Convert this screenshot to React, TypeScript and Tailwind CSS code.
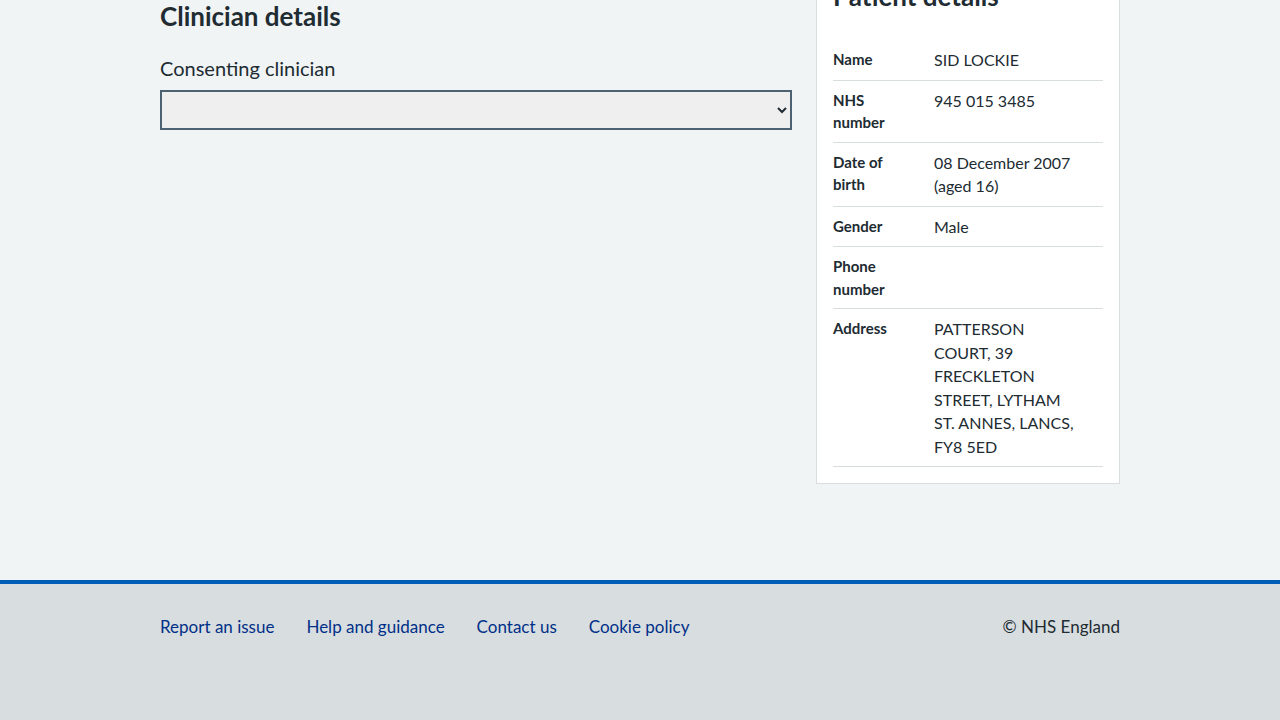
const patient = [
  { label: "Name", value: "SID LOCKIE" },
  { label: "NHS number", value: "945 015 3485" },
  { label: "Date of birth", value: "08 December 2007 (aged 16)" },
  { label: "Gender", value: "Male" },
  { label: "Phone number", value: "" },
  {
    label: "Address",
    value: "PATTERSON COURT, 39 FRECKLETON STREET, LYTHAM ST. ANNES, LANCS, FY8 5ED",
  },
];

const footerLinks = ["Report an issue", "Help and guidance", "Contact us", "Cookie policy"];

const App = () => {
  return (
    <div className="bg-[#f0f4f5] text-[#212b32] font-['Lato',sans-serif] overflow-hidden h-[720px] flex flex-col">
      <main className="w-[960px] mx-auto flex items-start gap-6 -mt-[37px] pb-[96px] shrink-0">
        {/* clinician */}
        <div className="w-[632px] pt-[37px]">
          <h2 className="text-[26px] leading-8 font-bold">Clinician details</h2>
          <label className="block mt-[22px] text-[20px] leading-7">Consenting clinician</label>
          <select className="mt-[8px] w-full h-10 border-2 border-[#4c6272] bg-[#efefef] text-[16px] px-2">
            <option></option>
          </select>
        </div>

        {/* patient card */}
        <div className="w-[304px] bg-white border border-[#d8dde0] px-4 pt-4 pb-4">
          <h2 className="text-[26px] leading-8 font-bold">Patient details</h2>
          <dl className="mt-[28px]">
            {patient.map((row) => (
              <div key={row.label} className="flex border-b border-[#d8dde0] py-2">
                <dt className="w-[101px] shrink-0 pr-7 text-[15px] leading-[22.5px] font-bold">{row.label}</dt>
                <dd className="w-[150px] text-[16px] leading-[23.5px]">{row.value}</dd>
              </div>
            ))}
          </dl>
        </div>
      </main>

      <footer className="border-t-4 border-[#005eb8] bg-[#d8dde0] flex-1">
        <div className="w-[960px] mx-auto pt-[31px] flex items-center justify-between text-[17px] leading-6">
          <ul className="flex gap-8">
            {footerLinks.map((link) => (
              <li key={link}>
                <a href="#" className="text-[#003087]">
                  {link}
                </a>
              </li>
            ))}
          </ul>
          <p>© NHS England</p>
        </div>
      </footer>
    </div>
  );
};

export default App;
